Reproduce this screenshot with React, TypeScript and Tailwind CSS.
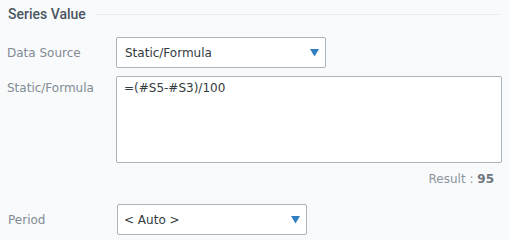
import React from 'react';

const Caret: React.FC = () => (
  <svg width="9" height="8" viewBox="0 0 9 8" className="shrink-0">
    <path d="M0 0 H9 L4.5 7.5 Z" fill="#2f7fc0" />
  </svg>
);

const App: React.FC = () => {
  return (
    <div
      className="w-[510px] h-[240px] bg-[#f8fafc] text-[12px] overflow-hidden"
      style={{ fontFamily: '"DejaVu Sans", Verdana, sans-serif' }}
    >
      <div className="flex items-center pl-2 pr-[10px] pt-[6px] h-[22px]">
        <span
          className="font-medium text-[14px] text-[#4b5661] leading-none"
          style={{ fontFamily: 'Roboto, "Liberation Sans", sans-serif' }}
        >
          Series Value
        </span>
        <div className="flex-1 ml-[10px] h-px bg-[#e7ebef]" />
      </div>

      <div className="flex items-center mt-[15px] pl-[7px]">
        <label className="w-[109px] text-[#838c94]">Data Source</label>
        <div className="w-[210px] h-[31px] bg-white border border-[#aab4bb] rounded-[2px] flex items-center justify-between pl-2 pr-[6px] text-[#333a40]">
          <span>Static/Formula</span>
          <Caret />
        </div>
      </div>

      <div className="flex items-start mt-[8px] pl-[7px]">
        <label className="w-[109px] pt-[3px] text-[#838c94]">Static/Formula</label>
        <textarea
          defaultValue="=(#S5-#S3)/100"
          className="w-[386px] h-[87px] bg-white border border-[#aab4bb] rounded-[2px] px-[7px] py-[2px] text-[#333a40] resize-none outline-none"
        />
      </div>

      <div className="flex justify-end pr-[16px] mt-[7px] text-[#8c959c]">
        <span>
          Result : <span className="font-bold text-[#6d777f]">95</span>
        </span>
      </div>

      <div className="flex items-center mt-[16px] pl-[8px]">
        <label className="w-[109px] text-[#838c94]">Period</label>
        <div className="w-[190px] h-[31px] bg-white border border-[#aab4bb] rounded-[2px] flex items-center justify-between pl-[6px] pr-[6px] text-[#333a40]">
          <span>&lt; Auto &gt;</span>
          <Caret />
        </div>
      </div>
    </div>
  );
};

export default App;
